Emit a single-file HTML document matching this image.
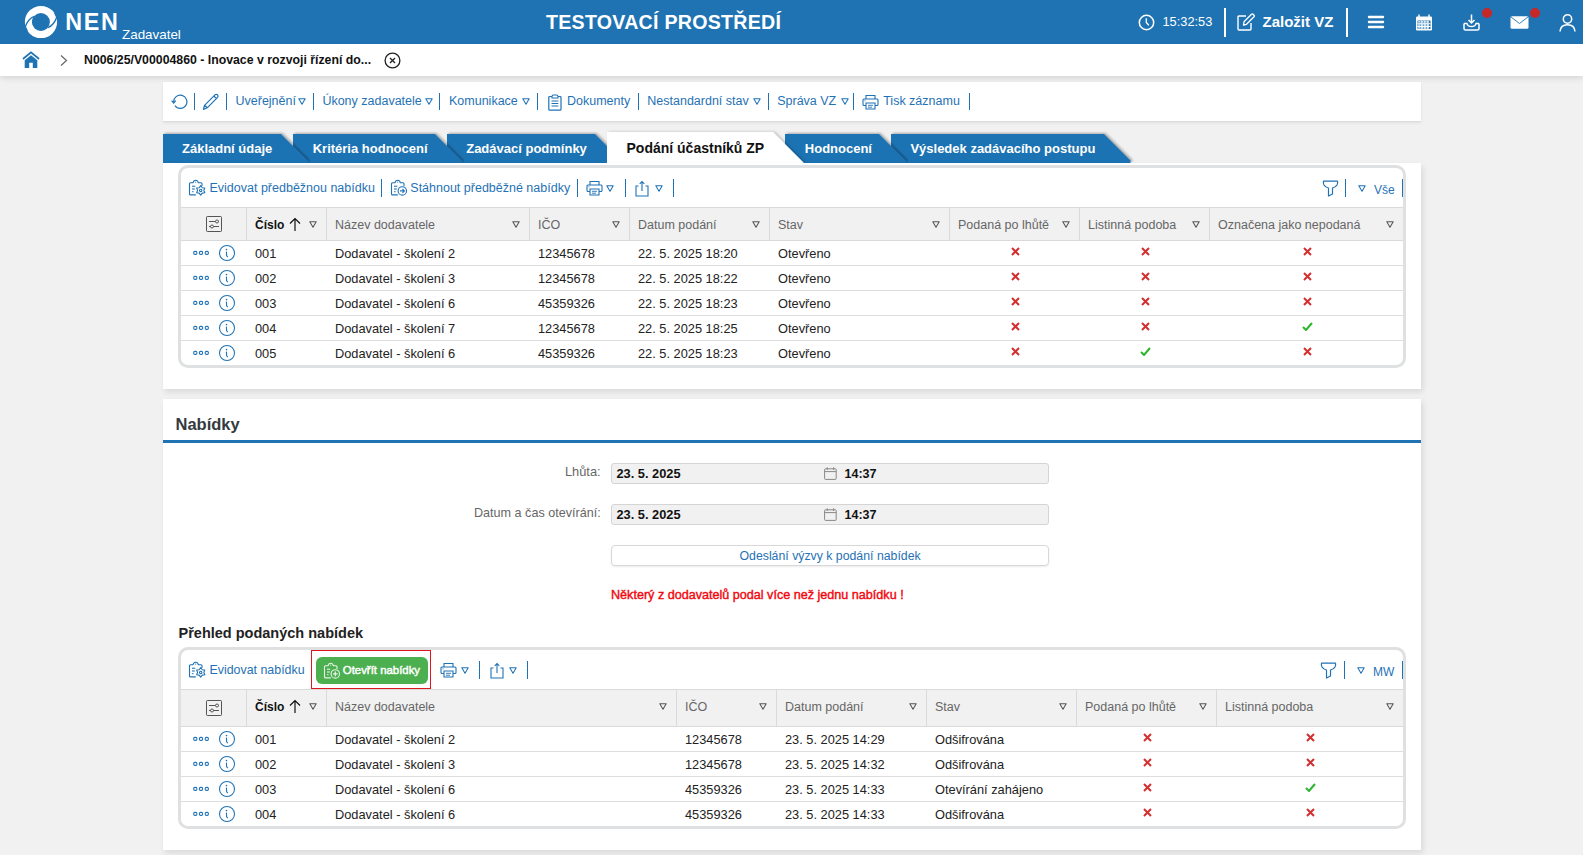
<!DOCTYPE html><html><head><meta charset="utf-8"><style>
*{box-sizing:border-box}
html,body{margin:0;padding:0}
body{width:1583px;height:855px;overflow:hidden;background:#f1f1f1;font-family:"Liberation Sans",sans-serif;position:relative}
.abs{position:absolute}
.t{white-space:nowrap}
svg.abs{display:block}
</style></head><body>
<div class="abs" style="left:0;top:0;width:1583px;height:44px;background:#1f73b3"></div>
<svg class="abs" style="left:24px;top:5px" width="34" height="34" viewBox="0 0 34 34">
<circle cx="17" cy="17" r="16.1" fill="#fff"/><circle cx="16.9" cy="17" r="9" fill="#1f73b3"/>
<path d="M10.2 11.3 Q3.8 13.9 1.0 22.5" fill="none" stroke="#1f73b3" stroke-width="1.4"/><path d="M0.5 21.5 L2.3 22.3 L3.9 25.9 L0 26.5 Z" fill="#1f73b3"/>
<path d="M23.8 22.7 Q30.2 20.1 33 11.5" fill="none" stroke="#1f73b3" stroke-width="1.4"/><path d="M33.5 12.5 L31.7 11.7 L30.1 8.1 L34 7.5 Z" fill="#1f73b3"/>
</svg>
<div class="abs t" style="left:65.3px;top:12px;height:20px;line-height:20px;font-size:23.3px;color:#fff;font-weight:700;letter-spacing:1.7px">NEN</div>
<div class="abs t" style="left:122px;top:25px;height:20px;line-height:20px;font-size:13.4px;color:#fff;font-weight:400;">Zadavatel</div>
<div class="abs t" style="left:546px;top:12px;height:20px;line-height:20px;font-size:19.6px;color:#fff;font-weight:700;letter-spacing:0.27px">TESTOVACÍ PROSTŘEDÍ</div>
<svg class="abs" style="left:1138px;top:13.5px" width="17" height="17" viewBox="0 0 17 17"><circle cx="8.5" cy="8.5" r="7.2" fill="none" stroke="#fff" stroke-width="1.5"/><path d="M8.3 4.2 V8.5 L10.8 11.3" fill="none" stroke="#fff" stroke-width="1.3"/></svg>
<div class="abs t" style="left:1162.5px;top:12px;height:20px;line-height:20px;font-size:12.8px;color:#fff;font-weight:400;">15:32:53</div>
<div class="abs" style="left:1224px;top:8px;width:2px;height:29px;background:#fff"></div>
<svg class="abs" style="left:1237px;top:13px" width="19" height="18" viewBox="0 0 19 18"><path d="M9 3 H2 Q1 3 1 4 V16 Q1 17 2 17 H13 Q14 17 14 16 V10" fill="none" stroke="#fff" stroke-width="1.4"/><path d="M6.5 12 L7 8.8 L14.5 1.3 Q15.3 0.6 16.1 1.3 L17 2.2 Q17.7 3 17 3.8 L9.5 11.3 Z" fill="none" stroke="#fff" stroke-width="1.3" stroke-linejoin="round"/></svg>
<div class="abs t" style="left:1262.5px;top:11.5px;height:20px;line-height:20px;font-size:15px;color:#fff;font-weight:700;">Založit VZ</div>
<div class="abs" style="left:1346px;top:8px;width:2px;height:29px;background:#fff"></div>
<svg class="abs" style="left:1367px;top:14px" width="18" height="16" viewBox="0 0 18 16"><path d="M2 3 H16 M2 8 H16 M2 13 H16" stroke="#fff" stroke-width="2.4" stroke-linecap="round"/></svg>
<svg class="abs" style="left:1415px;top:13.5px" width="18" height="17" viewBox="0 0 18 17"><rect x="1" y="2.5" width="16" height="14" rx="1.2" fill="#fff"/><rect x="2.5" y="6.5" width="13" height="8.5" fill="#1f73b3"/><path d="M4 0.5 V4 M14 0.5 V4" stroke="#fff" stroke-width="1.4"/><g fill="#fff"><rect x="5.6" y="6.5" width="1" height="8.5"/><rect x="8.6" y="6.5" width="1" height="8.5"/><rect x="11.6" y="6.5" width="1" height="8.5"/><rect x="2.5" y="9.2" width="13" height="1"/><rect x="2.5" y="12" width="13" height="1"/></g><g fill="#fff"><rect x="3.2" y="7.2" width="1.7" height="1.4"/><rect x="6.3" y="7.2" width="1.7" height="1.4"/><rect x="9.3" y="7.2" width="1.7" height="1.4"/><rect x="12.3" y="7.2" width="1.7" height="1.4"/><rect x="3.2" y="10.3" width="1.7" height="1.4"/><rect x="6.3" y="10.3" width="1.7" height="1.4"/><rect x="9.3" y="10.3" width="1.7" height="1.4"/><rect x="12.3" y="10.3" width="1.7" height="1.4"/><rect x="3.2" y="13.2" width="1.7" height="1.4"/><rect x="6.3" y="13.2" width="1.7" height="1.4"/><rect x="9.3" y="13.2" width="1.7" height="1.4"/><rect x="12.3" y="13.2" width="1.7" height="1.4"/></g></svg>
<svg class="abs" style="left:1463px;top:13.5px" width="18" height="17" viewBox="0 0 18 17"><path d="M8.5 0.5 V9 M5.5 6 L8.5 9 L11.5 6" fill="none" stroke="#fff" stroke-width="1.5"/><path d="M1 9.5 V14.5 Q1 16 2.5 16 H14.5 Q16 16 16 14.5 V9.5" fill="none" stroke="#fff" stroke-width="1.5"/><path d="M1 9.5 H4 Q4.5 12.5 8.5 12.5 Q12.5 12.5 13 9.5 H16" fill="none" stroke="#fff" stroke-width="1.5"/></svg>
<div class="abs" style="left:1482px;top:8px;width:10px;height:10px;border-radius:50%;background:#c62828"></div>
<svg class="abs" style="left:1510px;top:15.5px" width="19" height="13" viewBox="0 0 19 13"><rect x="0.5" y="0.3" width="18" height="12.4" rx="1.5" fill="#fff"/><path d="M1 1 L9.5 7.5 L18 1" fill="none" stroke="#1f73b3" stroke-width="0.9"/></svg>
<div class="abs" style="left:1530px;top:8px;width:10px;height:10px;border-radius:50%;background:#c62828"></div>
<svg class="abs" style="left:1559px;top:13.5px" width="17" height="18" viewBox="0 0 17 18"><circle cx="8.5" cy="5" r="4.2" fill="none" stroke="#fff" stroke-width="1.5"/><path d="M1 17.5 Q1.5 10.8 8.5 10.8 Q15.5 10.8 16 17.5" fill="none" stroke="#fff" stroke-width="1.5"/></svg>
<div class="abs" style="left:0;top:44px;width:1583px;height:32px;background:#fff;box-shadow:0 2px 6px rgba(0,0,0,0.12)"></div>
<svg class="abs" style="left:22px;top:51px" width="18" height="18" viewBox="0 0 18 18"><path d="M1.5 7.5 L9 1.3 L16.5 7.5" fill="none" stroke="#1f73b3" stroke-width="1.8" stroke-linecap="round"/><path d="M2.7 9.3 L9 4.2 L15.3 9.3 V17 H10.8 V11.8 H7.2 V17 H2.7 Z" fill="#1f73b3"/></svg>
<svg class="abs" style="left:59px;top:54px" width="10" height="13" viewBox="0 0 10 13"><path d="M2 1.5 L7.5 6.5 L2 11.5" fill="none" stroke="#666" stroke-width="1.2"/></svg>
<div class="abs t" style="left:84px;top:50px;height:20px;line-height:20px;font-size:12.3px;color:#111;font-weight:700;">N006/25/V00004860 - Inovace v rozvoji řízení do...</div>
<svg class="abs" style="left:383.5px;top:51.5px" width="17" height="17" viewBox="0 0 17 17"><circle cx="8.5" cy="8.5" r="7.4" fill="none" stroke="#222" stroke-width="1.3"/><path d="M6 6 L11 11 M11 6 L6 11" stroke="#222" stroke-width="1.3"/></svg>
<div class="abs" style="left:163px;top:82px;width:1258px;height:40px;background:#fff;border-bottom:1px solid #dcdcdc;box-shadow:0 1px 3px rgba(0,0,0,0.07)"></div>
<svg class="abs" style="left:171px;top:94px" width="18" height="17" viewBox="0 0 18 17"><path d="M2.7 8.2 A6.6 6.6 0 1 1 3.9 11.6" fill="none" stroke="#1f72b5" stroke-width="1.2"/><path d="M0.6 6.6 L2.7 9 L4.8 6.6" fill="none" stroke="#1f72b5" stroke-width="1.2"/></svg>
<div class="abs" style="left:194px;top:93px;width:1px;height:17px;background:#1f72b5"></div>
<svg class="abs" style="left:202px;top:93px" width="18" height="18" viewBox="0 0 18 18"><path d="M1.5 16.5 L2.5 12.3 L13 1.8 Q14.3 0.8 15.5 1.8 Q16.6 3 15.6 4.3 L5.2 14.8 Z M11.8 3 L14.5 5.7 M2.5 12.3 L5.2 14.8" fill="none" stroke="#1f72b5" stroke-width="1.2" stroke-linejoin="round"/></svg>
<div class="abs" style="left:226px;top:93px;width:1px;height:17px;background:#1f72b5"></div>
<div class="abs t" style="left:235.5px;top:91px;height:20px;line-height:20px;font-size:12.5px;color:#1f72b5;font-weight:400;">Uveřejnění</div>
<div class="abs" style="left:298px;top:98.0px"><svg width="8" height="7" viewBox="0 0 8 7" style="display:block"><path d="M0.8 0.8 L7.2 0.8 L4 6.2 Z" fill="none" stroke="#1f72b5" stroke-width="1.05" stroke-linejoin="round"/></svg></div>
<div class="abs" style="left:313px;top:93px;width:1px;height:17px;background:#1f72b5"></div>
<div class="abs t" style="left:322.4px;top:91px;height:20px;line-height:20px;font-size:12.5px;color:#1f72b5;font-weight:400;">Úkony zadavatele</div>
<div class="abs" style="left:425px;top:98.0px"><svg width="8" height="7" viewBox="0 0 8 7" style="display:block"><path d="M0.8 0.8 L7.2 0.8 L4 6.2 Z" fill="none" stroke="#1f72b5" stroke-width="1.05" stroke-linejoin="round"/></svg></div>
<div class="abs" style="left:439px;top:93px;width:1px;height:17px;background:#1f72b5"></div>
<div class="abs t" style="left:449px;top:91px;height:20px;line-height:20px;font-size:12.5px;color:#1f72b5;font-weight:400;">Komunikace</div>
<div class="abs" style="left:522px;top:98.0px"><svg width="8" height="7" viewBox="0 0 8 7" style="display:block"><path d="M0.8 0.8 L7.2 0.8 L4 6.2 Z" fill="none" stroke="#1f72b5" stroke-width="1.05" stroke-linejoin="round"/></svg></div>
<div class="abs" style="left:537px;top:93px;width:1px;height:17px;background:#1f72b5"></div>
<svg class="abs" style="left:547.5px;top:93.5px" width="14" height="17" viewBox="0 0 14 17"><path d="M4 2.5 H1.8 Q0.8 2.5 0.8 3.5 V15.3 Q0.8 16.2 1.8 16.2 H12 Q13 16.2 13 15.3 V3.5 Q13 2.5 12 2.5 H10" fill="none" stroke="#1f72b5" stroke-width="1.2"/><path d="M4 4 V2.5 Q4 1 5.5 1 H8.5 Q10 1 10 2.5 V4 Z" fill="none" stroke="#1f72b5" stroke-width="1.1"/><path d="M3.5 7 H10.3 M3.5 9.5 H10.3 M3.5 12 H10.3" stroke="#1f72b5" stroke-width="1.1"/></svg>
<div class="abs t" style="left:567px;top:91px;height:20px;line-height:20px;font-size:12.5px;color:#1f72b5;font-weight:400;">Dokumenty</div>
<div class="abs" style="left:638px;top:93px;width:1px;height:17px;background:#1f72b5"></div>
<div class="abs t" style="left:647.3px;top:91px;height:20px;line-height:20px;font-size:12.5px;color:#1f72b5;font-weight:400;">Nestandardní stav</div>
<div class="abs" style="left:753px;top:98.0px"><svg width="8" height="7" viewBox="0 0 8 7" style="display:block"><path d="M0.8 0.8 L7.2 0.8 L4 6.2 Z" fill="none" stroke="#1f72b5" stroke-width="1.05" stroke-linejoin="round"/></svg></div>
<div class="abs" style="left:768px;top:93px;width:1px;height:17px;background:#1f72b5"></div>
<div class="abs t" style="left:777.2px;top:91px;height:20px;line-height:20px;font-size:12.5px;color:#1f72b5;font-weight:400;">Správa VZ</div>
<div class="abs" style="left:841px;top:98.0px"><svg width="8" height="7" viewBox="0 0 8 7" style="display:block"><path d="M0.8 0.8 L7.2 0.8 L4 6.2 Z" fill="none" stroke="#1f72b5" stroke-width="1.05" stroke-linejoin="round"/></svg></div>
<div class="abs" style="left:853px;top:93px;width:1px;height:17px;background:#1f72b5"></div>
<svg class="abs" style="left:862px;top:93.5px" width="17" height="16" viewBox="0 0 17 16"><path d="M4 5 V1.5 H13 V5" fill="none" stroke="#1f72b5" stroke-width="1.1"/><path d="M4 11.5 H2 Q1 11.5 1 10.5 V6 Q1 5 2 5 H15 Q16 5 16 6 V10.5 Q16 11.5 15 11.5 H13" fill="none" stroke="#1f72b5" stroke-width="1.1"/><path d="M4 9 H13 V15 H4 Z" fill="none" stroke="#1f72b5" stroke-width="1.1"/><path d="M6 11.3 H11 M6 13.2 H10" stroke="#1f72b5" stroke-width="0.9"/><path d="M2.5 6.8 H3.5" stroke="#1f72b5" stroke-width="0.9"/></svg>
<div class="abs t" style="left:883.2px;top:91px;height:20px;line-height:20px;font-size:12.5px;color:#1f72b5;font-weight:400;">Tisk záznamu</div>
<div class="abs" style="left:969px;top:93px;width:1px;height:17px;background:#1f72b5"></div>
<svg class="abs" style="left:0;top:125px" width="1583" height="40" viewBox="0 125 1583 40"><defs><filter id="sh" x="-10%" y="-50%" width="130%" height="200%"><feDropShadow dx="1.6" dy="-1" stdDeviation="1.1" flood-color="#000" flood-opacity="0.30"/></filter><filter id="sh2" x="-10%" y="-50%" width="130%" height="200%"><feDropShadow dx="2" dy="0" stdDeviation="1.4" flood-color="#000" flood-opacity="0.22"/></filter></defs><path d="M891 134 H1104 L1130.5 160.5 V163 H891 Z" fill="#1f73b3" filter="url(#sh)"/><path d="M785 134 H879 L905.5 160.5 V163 H785 Z" fill="#1f73b3" filter="url(#sh)"/><path d="M447 134 H595 L621.5 160.5 V163 H447 Z" fill="#1f73b3" filter="url(#sh)"/><path d="M293 134 H435 L461.5 160.5 V163 H293 Z" fill="#1f73b3" filter="url(#sh)"/><path d="M163 134 H281 L307.5 160.5 V163 H163 Z" fill="#1f73b3" filter="url(#sh)"/><path d="M607 132 H773 L803.5 162.5 V163 H607 Z" fill="#fff" filter="url(#sh2)"/></svg>
<div class="abs t" style="left:182px;top:139px;height:20px;line-height:20px;font-size:13px;color:#fff;font-weight:700;">Základní údaje</div>
<div class="abs t" style="left:312.7px;top:139px;height:20px;line-height:20px;font-size:13px;color:#fff;font-weight:700;">Kritéria hodnocení</div>
<div class="abs t" style="left:466.2px;top:139px;height:20px;line-height:20px;font-size:13px;color:#fff;font-weight:700;">Zadávací podmínky</div>
<div class="abs t" style="left:626.5px;top:138px;height:20px;line-height:20px;font-size:14px;color:#111;font-weight:700;">Podání účastníků ZP</div>
<div class="abs t" style="left:804.8px;top:139px;height:20px;line-height:20px;font-size:13px;color:#fff;font-weight:700;">Hodnocení</div>
<div class="abs t" style="left:910.4px;top:139px;height:20px;line-height:20px;font-size:13px;color:#fff;font-weight:700;">Výsledek zadávacího postupu</div>
<div class="abs" style="left:163px;top:163px;width:1258px;height:226px;background:#fff;box-shadow:2px 3px 6px rgba(0,0,0,0.10)"></div>
<div class="abs" style="left:178px;top:165px;width:1228px;height:203px;border:3px solid #dfe0e2;border-radius:10px;background:#fff"></div><div class="abs" style="left:181px;top:207px;width:1222px;height:34px;background:#f1f1f1;border-top:1px solid #dadada;border-bottom:1px solid #dadada"></div><div class="abs" style="left:246px;top:207px;width:1px;height:33px;background:#dadada"></div><div class="abs" style="left:326px;top:207px;width:1px;height:33px;background:#dadada"></div><div class="abs" style="left:529px;top:207px;width:1px;height:33px;background:#dadada"></div><div class="abs" style="left:629px;top:207px;width:1px;height:33px;background:#dadada"></div><div class="abs" style="left:769px;top:207px;width:1px;height:33px;background:#dadada"></div><div class="abs" style="left:949px;top:207px;width:1px;height:33px;background:#dadada"></div><div class="abs" style="left:1079px;top:207px;width:1px;height:33px;background:#dadada"></div><div class="abs" style="left:1209px;top:207px;width:1px;height:33px;background:#dadada"></div><svg class="abs" style="left:206px;top:215.5px" width="16" height="16" viewBox="0 0 16 16"><rect x="0.5" y="0.5" width="15" height="15" rx="0.8" fill="none" stroke="#555" stroke-width="1"/><path d="M3 5.5 H9.5 M12.5 5.5 H13 M3 10.5 H4.5 M7.5 10.5 H13" stroke="#555" stroke-width="1"/><circle cx="11" cy="5.5" r="1.5" fill="none" stroke="#555" stroke-width="1"/><circle cx="6" cy="10.5" r="1.5" fill="none" stroke="#555" stroke-width="1"/></svg><div class="abs t" style="left:255px;top:214.5px;height:20px;line-height:20px;font-size:12px;color:#111;font-weight:700;">Číslo</div><svg class="abs" style="left:289px;top:216.5px" width="12" height="15" viewBox="0 0 12 15"><path d="M6 14 V1.5 M1 6.5 L6 1.5 L11 6.5" fill="none" stroke="#111" stroke-width="1.2"/></svg><div class="abs" style="left:309px;top:220.5px"><svg width="8" height="7" viewBox="0 0 8 7" style="display:block"><path d="M0.8 0.8 L7.2 0.8 L4 6.2 Z" fill="none" stroke="#555" stroke-width="1.05" stroke-linejoin="round"/></svg></div><div class="abs t" style="left:335px;top:214.5px;height:20px;line-height:20px;font-size:12.5px;color:#666;font-weight:400;">Název dodavatele</div><div class="abs" style="left:512px;top:220.5px"><svg width="8" height="7" viewBox="0 0 8 7" style="display:block"><path d="M0.8 0.8 L7.2 0.8 L4 6.2 Z" fill="none" stroke="#555" stroke-width="1.05" stroke-linejoin="round"/></svg></div><div class="abs t" style="left:538px;top:214.5px;height:20px;line-height:20px;font-size:12.5px;color:#666;font-weight:400;">IČO</div><div class="abs" style="left:612px;top:220.5px"><svg width="8" height="7" viewBox="0 0 8 7" style="display:block"><path d="M0.8 0.8 L7.2 0.8 L4 6.2 Z" fill="none" stroke="#555" stroke-width="1.05" stroke-linejoin="round"/></svg></div><div class="abs t" style="left:638px;top:214.5px;height:20px;line-height:20px;font-size:12.5px;color:#666;font-weight:400;">Datum podání</div><div class="abs" style="left:752px;top:220.5px"><svg width="8" height="7" viewBox="0 0 8 7" style="display:block"><path d="M0.8 0.8 L7.2 0.8 L4 6.2 Z" fill="none" stroke="#555" stroke-width="1.05" stroke-linejoin="round"/></svg></div><div class="abs t" style="left:778px;top:214.5px;height:20px;line-height:20px;font-size:12.5px;color:#666;font-weight:400;">Stav</div><div class="abs" style="left:932px;top:220.5px"><svg width="8" height="7" viewBox="0 0 8 7" style="display:block"><path d="M0.8 0.8 L7.2 0.8 L4 6.2 Z" fill="none" stroke="#555" stroke-width="1.05" stroke-linejoin="round"/></svg></div><div class="abs t" style="left:958px;top:214.5px;height:20px;line-height:20px;font-size:12.5px;color:#666;font-weight:400;">Podaná po lhůtě</div><div class="abs" style="left:1062px;top:220.5px"><svg width="8" height="7" viewBox="0 0 8 7" style="display:block"><path d="M0.8 0.8 L7.2 0.8 L4 6.2 Z" fill="none" stroke="#555" stroke-width="1.05" stroke-linejoin="round"/></svg></div><div class="abs t" style="left:1088px;top:214.5px;height:20px;line-height:20px;font-size:12.5px;color:#666;font-weight:400;">Listinná podoba</div><div class="abs" style="left:1192px;top:220.5px"><svg width="8" height="7" viewBox="0 0 8 7" style="display:block"><path d="M0.8 0.8 L7.2 0.8 L4 6.2 Z" fill="none" stroke="#555" stroke-width="1.05" stroke-linejoin="round"/></svg></div><div class="abs t" style="left:1218px;top:214.5px;height:20px;line-height:20px;font-size:12.5px;color:#666;font-weight:400;">Označena jako nepodaná</div><div class="abs" style="left:1386px;top:220.5px"><svg width="8" height="7" viewBox="0 0 8 7" style="display:block"><path d="M0.8 0.8 L7.2 0.8 L4 6.2 Z" fill="none" stroke="#555" stroke-width="1.05" stroke-linejoin="round"/></svg></div><svg class="abs" style="left:191px;top:243.5px" width="46" height="18" viewBox="0 0 46 18"><rect x="2.6999999999999997" y="7.35" width="3.2" height="3" rx="1.2" fill="none" stroke="#1f72b5" stroke-width="1.05"/><rect x="8.4" y="7.35" width="3.2" height="3" rx="1.2" fill="none" stroke="#1f72b5" stroke-width="1.05"/><rect x="14.200000000000001" y="7.35" width="3.2" height="3" rx="1.2" fill="none" stroke="#1f72b5" stroke-width="1.05"/><circle cx="36" cy="9" r="7.5" fill="none" stroke="#1f72b5" stroke-width="1.05"/><circle cx="35.5" cy="5.6" r="0.8" fill="#1f72b5"/><path d="M35.4 7.6 L35.6 11.6 Q35.9 12.5 36.9 12.9" fill="none" stroke="#1f72b5" stroke-width="1.1"/></svg><div class="abs t" style="left:255px;top:244.0px;height:20px;line-height:20px;font-size:12.8px;color:#222;font-weight:400;">001</div><div class="abs t" style="left:335px;top:244.0px;height:20px;line-height:20px;font-size:12.8px;color:#222;font-weight:400;">Dodavatel - školení 2</div><div class="abs t" style="left:538px;top:244.0px;height:20px;line-height:20px;font-size:12.8px;color:#222;font-weight:400;">12345678</div><div class="abs t" style="left:638px;top:244.0px;height:20px;line-height:20px;font-size:12.8px;color:#222;font-weight:400;">22. 5. 2025 18:20</div><div class="abs t" style="left:778px;top:244.0px;height:20px;line-height:20px;font-size:12.8px;color:#222;font-weight:400;">Otevřeno</div><svg class="abs" style="left:1010.5px;top:246.9px" width="9" height="9" viewBox="0 0 9 9"><path d="M1 1 L8 8 M8 1 L1 8" stroke="#d32f2f" stroke-width="2"/></svg><svg class="abs" style="left:1140.5px;top:246.9px" width="9" height="9" viewBox="0 0 9 9"><path d="M1 1 L8 8 M8 1 L1 8" stroke="#d32f2f" stroke-width="2"/></svg><svg class="abs" style="left:1302.5px;top:246.9px" width="9" height="9" viewBox="0 0 9 9"><path d="M1 1 L8 8 M8 1 L1 8" stroke="#d32f2f" stroke-width="2"/></svg><div class="abs" style="left:181px;top:265px;width:1222px;height:1px;background:#dedede"></div><svg class="abs" style="left:191px;top:268.5px" width="46" height="18" viewBox="0 0 46 18"><rect x="2.6999999999999997" y="7.35" width="3.2" height="3" rx="1.2" fill="none" stroke="#1f72b5" stroke-width="1.05"/><rect x="8.4" y="7.35" width="3.2" height="3" rx="1.2" fill="none" stroke="#1f72b5" stroke-width="1.05"/><rect x="14.200000000000001" y="7.35" width="3.2" height="3" rx="1.2" fill="none" stroke="#1f72b5" stroke-width="1.05"/><circle cx="36" cy="9" r="7.5" fill="none" stroke="#1f72b5" stroke-width="1.05"/><circle cx="35.5" cy="5.6" r="0.8" fill="#1f72b5"/><path d="M35.4 7.6 L35.6 11.6 Q35.9 12.5 36.9 12.9" fill="none" stroke="#1f72b5" stroke-width="1.1"/></svg><div class="abs t" style="left:255px;top:269.0px;height:20px;line-height:20px;font-size:12.8px;color:#222;font-weight:400;">002</div><div class="abs t" style="left:335px;top:269.0px;height:20px;line-height:20px;font-size:12.8px;color:#222;font-weight:400;">Dodavatel - školení 3</div><div class="abs t" style="left:538px;top:269.0px;height:20px;line-height:20px;font-size:12.8px;color:#222;font-weight:400;">12345678</div><div class="abs t" style="left:638px;top:269.0px;height:20px;line-height:20px;font-size:12.8px;color:#222;font-weight:400;">22. 5. 2025 18:22</div><div class="abs t" style="left:778px;top:269.0px;height:20px;line-height:20px;font-size:12.8px;color:#222;font-weight:400;">Otevřeno</div><svg class="abs" style="left:1010.5px;top:271.9px" width="9" height="9" viewBox="0 0 9 9"><path d="M1 1 L8 8 M8 1 L1 8" stroke="#d32f2f" stroke-width="2"/></svg><svg class="abs" style="left:1140.5px;top:271.9px" width="9" height="9" viewBox="0 0 9 9"><path d="M1 1 L8 8 M8 1 L1 8" stroke="#d32f2f" stroke-width="2"/></svg><svg class="abs" style="left:1302.5px;top:271.9px" width="9" height="9" viewBox="0 0 9 9"><path d="M1 1 L8 8 M8 1 L1 8" stroke="#d32f2f" stroke-width="2"/></svg><div class="abs" style="left:181px;top:290px;width:1222px;height:1px;background:#dedede"></div><svg class="abs" style="left:191px;top:293.5px" width="46" height="18" viewBox="0 0 46 18"><rect x="2.6999999999999997" y="7.35" width="3.2" height="3" rx="1.2" fill="none" stroke="#1f72b5" stroke-width="1.05"/><rect x="8.4" y="7.35" width="3.2" height="3" rx="1.2" fill="none" stroke="#1f72b5" stroke-width="1.05"/><rect x="14.200000000000001" y="7.35" width="3.2" height="3" rx="1.2" fill="none" stroke="#1f72b5" stroke-width="1.05"/><circle cx="36" cy="9" r="7.5" fill="none" stroke="#1f72b5" stroke-width="1.05"/><circle cx="35.5" cy="5.6" r="0.8" fill="#1f72b5"/><path d="M35.4 7.6 L35.6 11.6 Q35.9 12.5 36.9 12.9" fill="none" stroke="#1f72b5" stroke-width="1.1"/></svg><div class="abs t" style="left:255px;top:294.0px;height:20px;line-height:20px;font-size:12.8px;color:#222;font-weight:400;">003</div><div class="abs t" style="left:335px;top:294.0px;height:20px;line-height:20px;font-size:12.8px;color:#222;font-weight:400;">Dodavatel - školení 6</div><div class="abs t" style="left:538px;top:294.0px;height:20px;line-height:20px;font-size:12.8px;color:#222;font-weight:400;">45359326</div><div class="abs t" style="left:638px;top:294.0px;height:20px;line-height:20px;font-size:12.8px;color:#222;font-weight:400;">22. 5. 2025 18:23</div><div class="abs t" style="left:778px;top:294.0px;height:20px;line-height:20px;font-size:12.8px;color:#222;font-weight:400;">Otevřeno</div><svg class="abs" style="left:1010.5px;top:296.9px" width="9" height="9" viewBox="0 0 9 9"><path d="M1 1 L8 8 M8 1 L1 8" stroke="#d32f2f" stroke-width="2"/></svg><svg class="abs" style="left:1140.5px;top:296.9px" width="9" height="9" viewBox="0 0 9 9"><path d="M1 1 L8 8 M8 1 L1 8" stroke="#d32f2f" stroke-width="2"/></svg><svg class="abs" style="left:1302.5px;top:296.9px" width="9" height="9" viewBox="0 0 9 9"><path d="M1 1 L8 8 M8 1 L1 8" stroke="#d32f2f" stroke-width="2"/></svg><div class="abs" style="left:181px;top:315px;width:1222px;height:1px;background:#dedede"></div><svg class="abs" style="left:191px;top:318.5px" width="46" height="18" viewBox="0 0 46 18"><rect x="2.6999999999999997" y="7.35" width="3.2" height="3" rx="1.2" fill="none" stroke="#1f72b5" stroke-width="1.05"/><rect x="8.4" y="7.35" width="3.2" height="3" rx="1.2" fill="none" stroke="#1f72b5" stroke-width="1.05"/><rect x="14.200000000000001" y="7.35" width="3.2" height="3" rx="1.2" fill="none" stroke="#1f72b5" stroke-width="1.05"/><circle cx="36" cy="9" r="7.5" fill="none" stroke="#1f72b5" stroke-width="1.05"/><circle cx="35.5" cy="5.6" r="0.8" fill="#1f72b5"/><path d="M35.4 7.6 L35.6 11.6 Q35.9 12.5 36.9 12.9" fill="none" stroke="#1f72b5" stroke-width="1.1"/></svg><div class="abs t" style="left:255px;top:319.0px;height:20px;line-height:20px;font-size:12.8px;color:#222;font-weight:400;">004</div><div class="abs t" style="left:335px;top:319.0px;height:20px;line-height:20px;font-size:12.8px;color:#222;font-weight:400;">Dodavatel - školení 7</div><div class="abs t" style="left:538px;top:319.0px;height:20px;line-height:20px;font-size:12.8px;color:#222;font-weight:400;">12345678</div><div class="abs t" style="left:638px;top:319.0px;height:20px;line-height:20px;font-size:12.8px;color:#222;font-weight:400;">22. 5. 2025 18:25</div><div class="abs t" style="left:778px;top:319.0px;height:20px;line-height:20px;font-size:12.8px;color:#222;font-weight:400;">Otevřeno</div><svg class="abs" style="left:1010.5px;top:321.9px" width="9" height="9" viewBox="0 0 9 9"><path d="M1 1 L8 8 M8 1 L1 8" stroke="#d32f2f" stroke-width="2"/></svg><svg class="abs" style="left:1140.5px;top:321.9px" width="9" height="9" viewBox="0 0 9 9"><path d="M1 1 L8 8 M8 1 L1 8" stroke="#d32f2f" stroke-width="2"/></svg><svg class="abs" style="left:1301.5px;top:321.9px" width="11" height="9" viewBox="0 0 11 9"><path d="M1 5 L4 8 L10 1" fill="none" stroke="#2db52d" stroke-width="2"/></svg><div class="abs" style="left:181px;top:340px;width:1222px;height:1px;background:#dedede"></div><svg class="abs" style="left:191px;top:343.5px" width="46" height="18" viewBox="0 0 46 18"><rect x="2.6999999999999997" y="7.35" width="3.2" height="3" rx="1.2" fill="none" stroke="#1f72b5" stroke-width="1.05"/><rect x="8.4" y="7.35" width="3.2" height="3" rx="1.2" fill="none" stroke="#1f72b5" stroke-width="1.05"/><rect x="14.200000000000001" y="7.35" width="3.2" height="3" rx="1.2" fill="none" stroke="#1f72b5" stroke-width="1.05"/><circle cx="36" cy="9" r="7.5" fill="none" stroke="#1f72b5" stroke-width="1.05"/><circle cx="35.5" cy="5.6" r="0.8" fill="#1f72b5"/><path d="M35.4 7.6 L35.6 11.6 Q35.9 12.5 36.9 12.9" fill="none" stroke="#1f72b5" stroke-width="1.1"/></svg><div class="abs t" style="left:255px;top:344.0px;height:20px;line-height:20px;font-size:12.8px;color:#222;font-weight:400;">005</div><div class="abs t" style="left:335px;top:344.0px;height:20px;line-height:20px;font-size:12.8px;color:#222;font-weight:400;">Dodavatel - školení 6</div><div class="abs t" style="left:538px;top:344.0px;height:20px;line-height:20px;font-size:12.8px;color:#222;font-weight:400;">45359326</div><div class="abs t" style="left:638px;top:344.0px;height:20px;line-height:20px;font-size:12.8px;color:#222;font-weight:400;">22. 5. 2025 18:23</div><div class="abs t" style="left:778px;top:344.0px;height:20px;line-height:20px;font-size:12.8px;color:#222;font-weight:400;">Otevřeno</div><svg class="abs" style="left:1010.5px;top:346.9px" width="9" height="9" viewBox="0 0 9 9"><path d="M1 1 L8 8 M8 1 L1 8" stroke="#d32f2f" stroke-width="2"/></svg><svg class="abs" style="left:1139.5px;top:346.9px" width="11" height="9" viewBox="0 0 11 9"><path d="M1 5 L4 8 L10 1" fill="none" stroke="#2db52d" stroke-width="2"/></svg><svg class="abs" style="left:1302.5px;top:346.9px" width="9" height="9" viewBox="0 0 9 9"><path d="M1 1 L8 8 M8 1 L1 8" stroke="#d32f2f" stroke-width="2"/></svg><svg class="abs" style="left:188px;top:178.8px" width="18" height="17" viewBox="0 0 18 17"><path d="M7.8 15.9 H2.5 Q1.5 15.9 1.5 14.9 V4.7 Q1.5 3.7 2.5 3.7 H5.1 Q5.5 1.2 7.7 1.2 Q9.9 1.2 10.3 3.7 H13 Q14 3.7 14 4.7 V7" fill="none" stroke="#1f72b5" stroke-width="1.1" stroke-linejoin="round"/><circle cx="7.7" cy="3.1" r="0.6" fill="#1f72b5"/><path d="M4 7.3 H7.3" stroke="#1f72b5" stroke-width="1.4" opacity="0.75"/><path d="M4 10 H6.8" stroke="#1f72b5" stroke-width="1.1"/><path d="M4 12.7 H5.6" stroke="#1f72b5" stroke-width="1.3" opacity="0.75"/><path d="M12.70 6.70 L14.25 8.72 L16.77 9.05 L15.80 11.40 L16.77 13.75 L14.25 14.08 L12.70 16.10 L11.15 14.08 L8.63 13.75 L9.60 11.40 L8.63 9.05 L11.15 8.72 Z" fill="#fff" stroke="#1f72b5" stroke-width="1.1" stroke-linejoin="round"/><circle cx="12.7" cy="11.4" r="1.2" fill="none" stroke="#1f72b5" stroke-width="1.1"/></svg><div class="abs t" style="left:209.5px;top:178px;height:20px;line-height:20px;font-size:12.5px;color:#1f72b5;font-weight:400;">Evidovat předběžnou nabídku</div><div class="abs" style="left:381px;top:179px;width:1px;height:18px;background:#1f72b5"></div><svg class="abs" style="left:389.5px;top:178.8px" width="18" height="17" viewBox="0 0 18 17"><path d="M7.8 15.9 H2.5 Q1.5 15.9 1.5 14.9 V4.7 Q1.5 3.7 2.5 3.7 H5.1 Q5.5 1.2 7.7 1.2 Q9.9 1.2 10.3 3.7 H13 Q14 3.7 14 4.7 V7" fill="none" stroke="#1f72b5" stroke-width="1.1" stroke-linejoin="round"/><circle cx="7.7" cy="3.1" r="0.6" fill="#1f72b5"/><path d="M4 7.3 H7.3" stroke="#1f72b5" stroke-width="1.4" opacity="0.75"/><path d="M4 10 H6.8" stroke="#1f72b5" stroke-width="1.1"/><path d="M4 12.7 H5.6" stroke="#1f72b5" stroke-width="1.3" opacity="0.75"/><circle cx="12.3" cy="11.9" r="4.2" fill="#fff" stroke="#1f72b5" stroke-width="1.1"/><path d="M10 11.9 H14.3 M12.5 10 L14.4 11.9 L12.5 13.8" fill="none" stroke="#1f72b5" stroke-width="1.1"/></svg><div class="abs t" style="left:410.3px;top:178px;height:20px;line-height:20px;font-size:12.5px;color:#1f72b5;font-weight:400;">Stáhnout předběžné nabídky</div><div class="abs" style="left:577px;top:179px;width:1px;height:18px;background:#1f72b5"></div><svg class="abs" style="left:585.5px;top:180px" width="17" height="16" viewBox="0 0 17 16"><path d="M4 5 V1.5 H13 V5" fill="none" stroke="#1f72b5" stroke-width="1.1"/><path d="M4 11.5 H2 Q1 11.5 1 10.5 V6 Q1 5 2 5 H15 Q16 5 16 6 V10.5 Q16 11.5 15 11.5 H13" fill="none" stroke="#1f72b5" stroke-width="1.1"/><path d="M4 9 H13 V15 H4 Z" fill="none" stroke="#1f72b5" stroke-width="1.1"/><path d="M6 11.3 H11 M6 13.2 H10" stroke="#1f72b5" stroke-width="0.9"/><path d="M2.5 6.8 H3.5" stroke="#1f72b5" stroke-width="0.9"/></svg><div class="abs" style="left:606px;top:185.0px"><svg width="8" height="7" viewBox="0 0 8 7" style="display:block"><path d="M0.8 0.8 L7.2 0.8 L4 6.2 Z" fill="none" stroke="#1f72b5" stroke-width="1.05" stroke-linejoin="round"/></svg></div><div class="abs" style="left:625px;top:179px;width:1px;height:18px;background:#1f72b5"></div><svg class="abs" style="left:635px;top:179.5px" width="14" height="17" viewBox="0 0 14 17"><path d="M3.5 6 H1 V16 H13 V6 H10.5" fill="none" stroke="#1f72b5" stroke-width="1.1"/><path d="M7 11 V1.5 M4.7 3.8 L7 1.5 L9.3 3.8" fill="none" stroke="#1f72b5" stroke-width="1.1"/></svg><div class="abs" style="left:654.5px;top:185.0px"><svg width="8" height="7" viewBox="0 0 8 7" style="display:block"><path d="M0.8 0.8 L7.2 0.8 L4 6.2 Z" fill="none" stroke="#1f72b5" stroke-width="1.05" stroke-linejoin="round"/></svg></div><div class="abs" style="left:673px;top:179px;width:1px;height:18px;background:#1f72b5"></div><svg class="abs" style="left:1321.5px;top:179.5px" width="17" height="17" viewBox="0 0 17 17"><path d="M1.5 1.2 H15.5 Q16 3 15 5 Q13.5 7.5 10.5 8 V14 L6.5 16 V8 Q3.5 7.5 2 5 Q1 3 1.5 1.2 Z" fill="none" stroke="#1f72b5" stroke-width="1.2" stroke-linejoin="round"/></svg><div class="abs" style="left:1345px;top:179px;width:1px;height:18px;background:#1f72b5"></div><div class="abs" style="left:1358.2px;top:185.0px"><svg width="8" height="7" viewBox="0 0 8 7" style="display:block"><path d="M0.8 0.8 L7.2 0.8 L4 6.2 Z" fill="none" stroke="#1f72b5" stroke-width="1.05" stroke-linejoin="round"/></svg></div><div class="abs t" style="left:1374px;top:179.5px;height:20px;line-height:20px;font-size:12px;color:#1f72b5;font-weight:400;">Vše</div><div class="abs" style="left:1402px;top:179px;width:1px;height:18px;background:#1f72b5"></div>
<div class="abs" style="left:163px;top:399px;width:1258px;height:451px;background:#fff;box-shadow:2px 3px 6px rgba(0,0,0,0.10)"></div>
<div class="abs t" style="left:175.5px;top:413.5px;height:20px;line-height:20px;font-size:16.5px;color:#343a40;font-weight:700;">Nabídky</div>
<div class="abs" style="left:163px;top:440px;width:1258px;height:3px;background:#1f73b3"></div>
<div class="abs t" style="left:564.6px;top:462px;height:20px;line-height:20px;font-size:12.8px;color:#666;font-weight:400;width:36px;text-align:right">Lhůta:</div>
<div class="abs t" style="left:474px;top:503px;height:20px;line-height:20px;font-size:12.6px;color:#666;font-weight:400;">Datum a čas otevírání:</div>
<div class="abs" style="left:611px;top:463px;width:438px;height:21px;background:#f1f1f1;border:1px solid #d4d4d4;border-radius:3px"></div>
<div class="abs t" style="left:616.5px;top:463.5px;height:20px;line-height:20px;font-size:12.8px;color:#111;font-weight:700;">23. 5. 2025</div>
<svg class="abs" style="left:823.5px;top:467px" width="13" height="13" viewBox="0 0 13 13"><rect x="0.6" y="1.8" width="11.6" height="10.6" rx="0.8" fill="none" stroke="#888" stroke-width="1"/><path d="M0.6 4.6 H12.2 M3.2 0.3 V3 M9.6 0.3 V3" stroke="#888" stroke-width="1"/></svg>
<div class="abs t" style="left:844.5px;top:463.5px;height:20px;line-height:20px;font-size:12.5px;color:#111;font-weight:700;">14:37</div>
<div class="abs" style="left:611px;top:504px;width:438px;height:21px;background:#f1f1f1;border:1px solid #d4d4d4;border-radius:3px"></div>
<div class="abs t" style="left:616.5px;top:504.5px;height:20px;line-height:20px;font-size:12.8px;color:#111;font-weight:700;">23. 5. 2025</div>
<svg class="abs" style="left:823.5px;top:508px" width="13" height="13" viewBox="0 0 13 13"><rect x="0.6" y="1.8" width="11.6" height="10.6" rx="0.8" fill="none" stroke="#888" stroke-width="1"/><path d="M0.6 4.6 H12.2 M3.2 0.3 V3 M9.6 0.3 V3" stroke="#888" stroke-width="1"/></svg>
<div class="abs t" style="left:844.5px;top:504.5px;height:20px;line-height:20px;font-size:12.5px;color:#111;font-weight:700;">14:37</div>
<div class="abs" style="left:611px;top:545px;width:438px;height:21px;background:#fff;border:1px solid #d8d8d8;border-radius:4px;box-shadow:0 1px 2px rgba(0,0,0,0.08)"></div>
<div class="abs t" style="left:739.5px;top:545.5px;height:20px;line-height:20px;font-size:12.3px;color:#1f72b5;font-weight:400;">Odeslání výzvy k podání nabídek</div>
<div class="abs t" style="left:611px;top:585px;height:20px;line-height:20px;font-size:12.6px;color:#f2070f;font-weight:400;-webkit-text-stroke:0.4px #f2070f">Některý z dodavatelů podal více než jednu nabídku !</div>
<div class="abs t" style="left:178.5px;top:622.5px;height:20px;line-height:20px;font-size:14.5px;color:#222;font-weight:700;">Přehled podaných nabídek</div>
<div class="abs" style="left:178px;top:647px;width:1228px;height:182px;border:3px solid #dfe0e2;border-radius:10px;background:#fff"></div><div class="abs" style="left:181px;top:689px;width:1222px;height:38px;background:#f1f1f1;border-top:1px solid #dadada;border-bottom:1px solid #dadada"></div><div class="abs" style="left:246px;top:689px;width:1px;height:37px;background:#dadada"></div><div class="abs" style="left:326px;top:689px;width:1px;height:37px;background:#dadada"></div><div class="abs" style="left:676px;top:689px;width:1px;height:37px;background:#dadada"></div><div class="abs" style="left:776px;top:689px;width:1px;height:37px;background:#dadada"></div><div class="abs" style="left:926px;top:689px;width:1px;height:37px;background:#dadada"></div><div class="abs" style="left:1076px;top:689px;width:1px;height:37px;background:#dadada"></div><div class="abs" style="left:1216px;top:689px;width:1px;height:37px;background:#dadada"></div><svg class="abs" style="left:206px;top:699.5px" width="16" height="16" viewBox="0 0 16 16"><rect x="0.5" y="0.5" width="15" height="15" rx="0.8" fill="none" stroke="#555" stroke-width="1"/><path d="M3 5.5 H9.5 M12.5 5.5 H13 M3 10.5 H4.5 M7.5 10.5 H13" stroke="#555" stroke-width="1"/><circle cx="11" cy="5.5" r="1.5" fill="none" stroke="#555" stroke-width="1"/><circle cx="6" cy="10.5" r="1.5" fill="none" stroke="#555" stroke-width="1"/></svg><div class="abs t" style="left:255px;top:696.5px;height:20px;line-height:20px;font-size:12px;color:#111;font-weight:700;">Číslo</div><svg class="abs" style="left:289px;top:698.5px" width="12" height="15" viewBox="0 0 12 15"><path d="M6 14 V1.5 M1 6.5 L6 1.5 L11 6.5" fill="none" stroke="#111" stroke-width="1.2"/></svg><div class="abs" style="left:309px;top:702.5px"><svg width="8" height="7" viewBox="0 0 8 7" style="display:block"><path d="M0.8 0.8 L7.2 0.8 L4 6.2 Z" fill="none" stroke="#555" stroke-width="1.05" stroke-linejoin="round"/></svg></div><div class="abs t" style="left:335px;top:696.5px;height:20px;line-height:20px;font-size:12.5px;color:#666;font-weight:400;">Název dodavatele</div><div class="abs" style="left:659px;top:702.5px"><svg width="8" height="7" viewBox="0 0 8 7" style="display:block"><path d="M0.8 0.8 L7.2 0.8 L4 6.2 Z" fill="none" stroke="#555" stroke-width="1.05" stroke-linejoin="round"/></svg></div><div class="abs t" style="left:685px;top:696.5px;height:20px;line-height:20px;font-size:12.5px;color:#666;font-weight:400;">IČO</div><div class="abs" style="left:759px;top:702.5px"><svg width="8" height="7" viewBox="0 0 8 7" style="display:block"><path d="M0.8 0.8 L7.2 0.8 L4 6.2 Z" fill="none" stroke="#555" stroke-width="1.05" stroke-linejoin="round"/></svg></div><div class="abs t" style="left:785px;top:696.5px;height:20px;line-height:20px;font-size:12.5px;color:#666;font-weight:400;">Datum podání</div><div class="abs" style="left:909px;top:702.5px"><svg width="8" height="7" viewBox="0 0 8 7" style="display:block"><path d="M0.8 0.8 L7.2 0.8 L4 6.2 Z" fill="none" stroke="#555" stroke-width="1.05" stroke-linejoin="round"/></svg></div><div class="abs t" style="left:935px;top:696.5px;height:20px;line-height:20px;font-size:12.5px;color:#666;font-weight:400;">Stav</div><div class="abs" style="left:1059px;top:702.5px"><svg width="8" height="7" viewBox="0 0 8 7" style="display:block"><path d="M0.8 0.8 L7.2 0.8 L4 6.2 Z" fill="none" stroke="#555" stroke-width="1.05" stroke-linejoin="round"/></svg></div><div class="abs t" style="left:1085px;top:696.5px;height:20px;line-height:20px;font-size:12.5px;color:#666;font-weight:400;">Podaná po lhůtě</div><div class="abs" style="left:1199px;top:702.5px"><svg width="8" height="7" viewBox="0 0 8 7" style="display:block"><path d="M0.8 0.8 L7.2 0.8 L4 6.2 Z" fill="none" stroke="#555" stroke-width="1.05" stroke-linejoin="round"/></svg></div><div class="abs t" style="left:1225px;top:696.5px;height:20px;line-height:20px;font-size:12.5px;color:#666;font-weight:400;">Listinná podoba</div><div class="abs" style="left:1386px;top:702.5px"><svg width="8" height="7" viewBox="0 0 8 7" style="display:block"><path d="M0.8 0.8 L7.2 0.8 L4 6.2 Z" fill="none" stroke="#555" stroke-width="1.05" stroke-linejoin="round"/></svg></div><svg class="abs" style="left:191px;top:729.5px" width="46" height="18" viewBox="0 0 46 18"><rect x="2.6999999999999997" y="7.35" width="3.2" height="3" rx="1.2" fill="none" stroke="#1f72b5" stroke-width="1.05"/><rect x="8.4" y="7.35" width="3.2" height="3" rx="1.2" fill="none" stroke="#1f72b5" stroke-width="1.05"/><rect x="14.200000000000001" y="7.35" width="3.2" height="3" rx="1.2" fill="none" stroke="#1f72b5" stroke-width="1.05"/><circle cx="36" cy="9" r="7.5" fill="none" stroke="#1f72b5" stroke-width="1.05"/><circle cx="35.5" cy="5.6" r="0.8" fill="#1f72b5"/><path d="M35.4 7.6 L35.6 11.6 Q35.9 12.5 36.9 12.9" fill="none" stroke="#1f72b5" stroke-width="1.1"/></svg><div class="abs t" style="left:255px;top:730.0px;height:20px;line-height:20px;font-size:12.8px;color:#222;font-weight:400;">001</div><div class="abs t" style="left:335px;top:730.0px;height:20px;line-height:20px;font-size:12.8px;color:#222;font-weight:400;">Dodavatel - školení 2</div><div class="abs t" style="left:685px;top:730.0px;height:20px;line-height:20px;font-size:12.8px;color:#222;font-weight:400;">12345678</div><div class="abs t" style="left:785px;top:730.0px;height:20px;line-height:20px;font-size:12.8px;color:#222;font-weight:400;">23. 5. 2025 14:29</div><div class="abs t" style="left:935px;top:730.0px;height:20px;line-height:20px;font-size:12.8px;color:#222;font-weight:400;">Odšifrována</div><svg class="abs" style="left:1142.5px;top:732.9px" width="9" height="9" viewBox="0 0 9 9"><path d="M1 1 L8 8 M8 1 L1 8" stroke="#d32f2f" stroke-width="2"/></svg><svg class="abs" style="left:1306.0px;top:732.9px" width="9" height="9" viewBox="0 0 9 9"><path d="M1 1 L8 8 M8 1 L1 8" stroke="#d32f2f" stroke-width="2"/></svg><div class="abs" style="left:181px;top:751px;width:1222px;height:1px;background:#dedede"></div><svg class="abs" style="left:191px;top:754.5px" width="46" height="18" viewBox="0 0 46 18"><rect x="2.6999999999999997" y="7.35" width="3.2" height="3" rx="1.2" fill="none" stroke="#1f72b5" stroke-width="1.05"/><rect x="8.4" y="7.35" width="3.2" height="3" rx="1.2" fill="none" stroke="#1f72b5" stroke-width="1.05"/><rect x="14.200000000000001" y="7.35" width="3.2" height="3" rx="1.2" fill="none" stroke="#1f72b5" stroke-width="1.05"/><circle cx="36" cy="9" r="7.5" fill="none" stroke="#1f72b5" stroke-width="1.05"/><circle cx="35.5" cy="5.6" r="0.8" fill="#1f72b5"/><path d="M35.4 7.6 L35.6 11.6 Q35.9 12.5 36.9 12.9" fill="none" stroke="#1f72b5" stroke-width="1.1"/></svg><div class="abs t" style="left:255px;top:755.0px;height:20px;line-height:20px;font-size:12.8px;color:#222;font-weight:400;">002</div><div class="abs t" style="left:335px;top:755.0px;height:20px;line-height:20px;font-size:12.8px;color:#222;font-weight:400;">Dodavatel - školení 3</div><div class="abs t" style="left:685px;top:755.0px;height:20px;line-height:20px;font-size:12.8px;color:#222;font-weight:400;">12345678</div><div class="abs t" style="left:785px;top:755.0px;height:20px;line-height:20px;font-size:12.8px;color:#222;font-weight:400;">23. 5. 2025 14:32</div><div class="abs t" style="left:935px;top:755.0px;height:20px;line-height:20px;font-size:12.8px;color:#222;font-weight:400;">Odšifrována</div><svg class="abs" style="left:1142.5px;top:757.9px" width="9" height="9" viewBox="0 0 9 9"><path d="M1 1 L8 8 M8 1 L1 8" stroke="#d32f2f" stroke-width="2"/></svg><svg class="abs" style="left:1306.0px;top:757.9px" width="9" height="9" viewBox="0 0 9 9"><path d="M1 1 L8 8 M8 1 L1 8" stroke="#d32f2f" stroke-width="2"/></svg><div class="abs" style="left:181px;top:776px;width:1222px;height:1px;background:#dedede"></div><svg class="abs" style="left:191px;top:779.5px" width="46" height="18" viewBox="0 0 46 18"><rect x="2.6999999999999997" y="7.35" width="3.2" height="3" rx="1.2" fill="none" stroke="#1f72b5" stroke-width="1.05"/><rect x="8.4" y="7.35" width="3.2" height="3" rx="1.2" fill="none" stroke="#1f72b5" stroke-width="1.05"/><rect x="14.200000000000001" y="7.35" width="3.2" height="3" rx="1.2" fill="none" stroke="#1f72b5" stroke-width="1.05"/><circle cx="36" cy="9" r="7.5" fill="none" stroke="#1f72b5" stroke-width="1.05"/><circle cx="35.5" cy="5.6" r="0.8" fill="#1f72b5"/><path d="M35.4 7.6 L35.6 11.6 Q35.9 12.5 36.9 12.9" fill="none" stroke="#1f72b5" stroke-width="1.1"/></svg><div class="abs t" style="left:255px;top:780.0px;height:20px;line-height:20px;font-size:12.8px;color:#222;font-weight:400;">003</div><div class="abs t" style="left:335px;top:780.0px;height:20px;line-height:20px;font-size:12.8px;color:#222;font-weight:400;">Dodavatel - školení 6</div><div class="abs t" style="left:685px;top:780.0px;height:20px;line-height:20px;font-size:12.8px;color:#222;font-weight:400;">45359326</div><div class="abs t" style="left:785px;top:780.0px;height:20px;line-height:20px;font-size:12.8px;color:#222;font-weight:400;">23. 5. 2025 14:33</div><div class="abs t" style="left:935px;top:780.0px;height:20px;line-height:20px;font-size:12.8px;color:#222;font-weight:400;">Otevírání zahájeno</div><svg class="abs" style="left:1142.5px;top:782.9px" width="9" height="9" viewBox="0 0 9 9"><path d="M1 1 L8 8 M8 1 L1 8" stroke="#d32f2f" stroke-width="2"/></svg><svg class="abs" style="left:1305.0px;top:782.9px" width="11" height="9" viewBox="0 0 11 9"><path d="M1 5 L4 8 L10 1" fill="none" stroke="#2db52d" stroke-width="2"/></svg><div class="abs" style="left:181px;top:801px;width:1222px;height:1px;background:#dedede"></div><svg class="abs" style="left:191px;top:804.5px" width="46" height="18" viewBox="0 0 46 18"><rect x="2.6999999999999997" y="7.35" width="3.2" height="3" rx="1.2" fill="none" stroke="#1f72b5" stroke-width="1.05"/><rect x="8.4" y="7.35" width="3.2" height="3" rx="1.2" fill="none" stroke="#1f72b5" stroke-width="1.05"/><rect x="14.200000000000001" y="7.35" width="3.2" height="3" rx="1.2" fill="none" stroke="#1f72b5" stroke-width="1.05"/><circle cx="36" cy="9" r="7.5" fill="none" stroke="#1f72b5" stroke-width="1.05"/><circle cx="35.5" cy="5.6" r="0.8" fill="#1f72b5"/><path d="M35.4 7.6 L35.6 11.6 Q35.9 12.5 36.9 12.9" fill="none" stroke="#1f72b5" stroke-width="1.1"/></svg><div class="abs t" style="left:255px;top:805.0px;height:20px;line-height:20px;font-size:12.8px;color:#222;font-weight:400;">004</div><div class="abs t" style="left:335px;top:805.0px;height:20px;line-height:20px;font-size:12.8px;color:#222;font-weight:400;">Dodavatel - školení 6</div><div class="abs t" style="left:685px;top:805.0px;height:20px;line-height:20px;font-size:12.8px;color:#222;font-weight:400;">45359326</div><div class="abs t" style="left:785px;top:805.0px;height:20px;line-height:20px;font-size:12.8px;color:#222;font-weight:400;">23. 5. 2025 14:33</div><div class="abs t" style="left:935px;top:805.0px;height:20px;line-height:20px;font-size:12.8px;color:#222;font-weight:400;">Odšifrována</div><svg class="abs" style="left:1142.5px;top:807.9px" width="9" height="9" viewBox="0 0 9 9"><path d="M1 1 L8 8 M8 1 L1 8" stroke="#d32f2f" stroke-width="2"/></svg><svg class="abs" style="left:1306.0px;top:807.9px" width="9" height="9" viewBox="0 0 9 9"><path d="M1 1 L8 8 M8 1 L1 8" stroke="#d32f2f" stroke-width="2"/></svg><svg class="abs" style="left:188px;top:660.8px" width="18" height="17" viewBox="0 0 18 17"><path d="M7.8 15.9 H2.5 Q1.5 15.9 1.5 14.9 V4.7 Q1.5 3.7 2.5 3.7 H5.1 Q5.5 1.2 7.7 1.2 Q9.9 1.2 10.3 3.7 H13 Q14 3.7 14 4.7 V7" fill="none" stroke="#1f72b5" stroke-width="1.1" stroke-linejoin="round"/><circle cx="7.7" cy="3.1" r="0.6" fill="#1f72b5"/><path d="M4 7.3 H7.3" stroke="#1f72b5" stroke-width="1.4" opacity="0.75"/><path d="M4 10 H6.8" stroke="#1f72b5" stroke-width="1.1"/><path d="M4 12.7 H5.6" stroke="#1f72b5" stroke-width="1.3" opacity="0.75"/><path d="M12.70 6.70 L14.25 8.72 L16.77 9.05 L15.80 11.40 L16.77 13.75 L14.25 14.08 L12.70 16.10 L11.15 14.08 L8.63 13.75 L9.60 11.40 L8.63 9.05 L11.15 8.72 Z" fill="#fff" stroke="#1f72b5" stroke-width="1.1" stroke-linejoin="round"/><circle cx="12.7" cy="11.4" r="1.2" fill="none" stroke="#1f72b5" stroke-width="1.1"/></svg><div class="abs t" style="left:209.5px;top:660px;height:20px;line-height:20px;font-size:12.4px;color:#1f72b5;font-weight:400;">Evidovat nabídku</div><div class="abs" style="left:311px;top:650px;width:120px;height:39px;border:1.5px solid #e0161e"></div><div class="abs" style="left:316px;top:656.5px;width:112px;height:27px;background:#4caf50;border-radius:6px"></div><svg class="abs" style="left:322.5px;top:661.5px" width="18" height="17" viewBox="0 0 18 17"><path d="M7.8 15.9 H2.5 Q1.5 15.9 1.5 14.9 V4.7 Q1.5 3.7 2.5 3.7 H5.1 Q5.5 1.2 7.7 1.2 Q9.9 1.2 10.3 3.7 H13 Q14 3.7 14 4.7 V7" fill="none" stroke="#e8f5e9" stroke-width="1.1" stroke-linejoin="round"/><circle cx="7.7" cy="3.1" r="0.6" fill="#e8f5e9"/><path d="M4 7.3 H7.3" stroke="#e8f5e9" stroke-width="1.4" opacity="0.75"/><path d="M4 10 H6.8" stroke="#e8f5e9" stroke-width="1.1"/><path d="M4 12.7 H5.6" stroke="#e8f5e9" stroke-width="1.3" opacity="0.75"/><circle cx="12.3" cy="11.9" r="4.2" fill="#4caf50" stroke="#e8f5e9" stroke-width="1.1"/><path d="M12.3 9.6 V14.2 M10 11.9 H14.6" fill="none" stroke="#e8f5e9" stroke-width="1.2"/></svg><div class="abs t" style="left:342.8px;top:659.5px;height:20px;line-height:20px;font-size:11.4px;color:#fff;font-weight:400;-webkit-text-stroke:0.45px #fff">Otevřít nabídky</div><svg class="abs" style="left:440px;top:662px" width="17" height="16" viewBox="0 0 17 16"><path d="M4 5 V1.5 H13 V5" fill="none" stroke="#1f72b5" stroke-width="1.1"/><path d="M4 11.5 H2 Q1 11.5 1 10.5 V6 Q1 5 2 5 H15 Q16 5 16 6 V10.5 Q16 11.5 15 11.5 H13" fill="none" stroke="#1f72b5" stroke-width="1.1"/><path d="M4 9 H13 V15 H4 Z" fill="none" stroke="#1f72b5" stroke-width="1.1"/><path d="M6 11.3 H11 M6 13.2 H10" stroke="#1f72b5" stroke-width="0.9"/><path d="M2.5 6.8 H3.5" stroke="#1f72b5" stroke-width="0.9"/></svg><div class="abs" style="left:461px;top:667.0px"><svg width="8" height="7" viewBox="0 0 8 7" style="display:block"><path d="M0.8 0.8 L7.2 0.8 L4 6.2 Z" fill="none" stroke="#1f72b5" stroke-width="1.05" stroke-linejoin="round"/></svg></div><div class="abs" style="left:479px;top:661px;width:1px;height:18px;background:#1f72b5"></div><svg class="abs" style="left:490px;top:661.5px" width="14" height="17" viewBox="0 0 14 17"><path d="M3.5 6 H1 V16 H13 V6 H10.5" fill="none" stroke="#1f72b5" stroke-width="1.1"/><path d="M7 11 V1.5 M4.7 3.8 L7 1.5 L9.3 3.8" fill="none" stroke="#1f72b5" stroke-width="1.1"/></svg><div class="abs" style="left:509px;top:667.0px"><svg width="8" height="7" viewBox="0 0 8 7" style="display:block"><path d="M0.8 0.8 L7.2 0.8 L4 6.2 Z" fill="none" stroke="#1f72b5" stroke-width="1.05" stroke-linejoin="round"/></svg></div><div class="abs" style="left:527px;top:661px;width:1px;height:18px;background:#1f72b5"></div><svg class="abs" style="left:1320px;top:661.5px" width="17" height="17" viewBox="0 0 17 17"><path d="M1.5 1.2 H15.5 Q16 3 15 5 Q13.5 7.5 10.5 8 V14 L6.5 16 V8 Q3.5 7.5 2 5 Q1 3 1.5 1.2 Z" fill="none" stroke="#1f72b5" stroke-width="1.2" stroke-linejoin="round"/></svg><div class="abs" style="left:1344px;top:661px;width:1px;height:18px;background:#1f72b5"></div><div class="abs" style="left:1356.6px;top:667.0px"><svg width="8" height="7" viewBox="0 0 8 7" style="display:block"><path d="M0.8 0.8 L7.2 0.8 L4 6.2 Z" fill="none" stroke="#1f72b5" stroke-width="1.05" stroke-linejoin="round"/></svg></div><div class="abs t" style="left:1373px;top:661.8px;height:20px;line-height:20px;font-size:12px;color:#1f72b5;font-weight:400;">MW</div><div class="abs" style="left:1402px;top:661px;width:1px;height:18px;background:#1f72b5"></div>
</body></html>
